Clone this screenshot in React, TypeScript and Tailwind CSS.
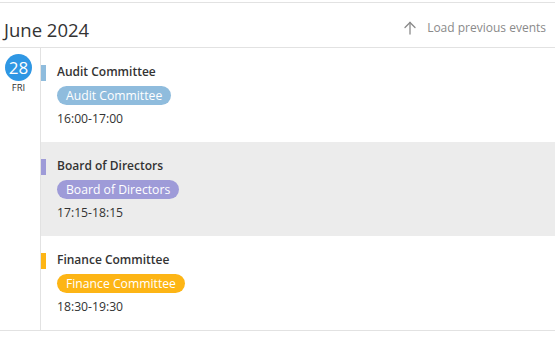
import React from 'react'

type Ev = { title: string; time: string; color: string; bar: string; shaded?: boolean }

const EVENTS: Ev[] = [
  { title: 'Audit Committee', time: '16:00-17:00', color: 'bg-[#8fbcdd]', bar: 'bg-[#8fbcdd]' },
  { title: 'Board of Directors', time: '17:15-18:15', color: 'bg-[#9e9bd8]', bar: 'bg-[#9e9bd8]', shaded: true },
  { title: 'Finance Committee', time: '18:30-19:30', color: 'bg-[#fdb515]', bar: 'bg-[#fdb515]' },
]

function ArrowUp() {
  return (
    <svg width="12" height="14" viewBox="0 0 12 14" fill="none" stroke="#8a8a8a" strokeWidth="1.3" strokeLinecap="round">
      <path d="M6 13V1.5" />
      <path d="M1 6.5L6 1.5L11 6.5" />
    </svg>
  )
}

export default function App() {
  return (
    <div className="w-[555px] h-[348px] bg-white font-['Open_Sans',sans-serif] text-[#333]">
      <div className="h-[2px]" />
      <div className="border-t border-[#e2e2e2] h-[45px] flex items-center justify-between pl-[4px] pr-[9px]">
        <h1 className="text-[18.5px] leading-none text-[#333] pt-[11px]">June 2024</h1>
        <button className="flex items-center gap-[11px] text-[12px] text-[#8a8a8a] pt-[6px]">
          <ArrowUp />
          <span>Load previous events</span>
        </button>
      </div>
      <div className="border-t border-b border-[#e2e2e2] flex">
        <div className="w-[41px] shrink-0 border-r border-[#e2e2e2] flex flex-col items-center pt-[6px]">
          <div className="w-[27px] h-[27px] rounded-full bg-[#2f97e4] text-white text-[17px] leading-none flex items-center justify-center -ml-[3px]">
            28
          </div>
          <div className="text-[9.5px] leading-none mt-[2px] -ml-[3px] text-[#333]">FRI</div>
        </div>
        <div className="flex-1 flex flex-col">
          {EVENTS.map((e) => (
            <div key={e.title} className={`h-[94px] flex ${e.shaded ? 'bg-[#ececec]' : ''}`}>
              <div className={`w-[5px] h-[16px] mt-[17px] shrink-0 ${e.bar}`} />
              <div className="pl-[11px] pt-[15px] flex flex-col items-start">
                <div className="text-[12px] font-semibold leading-[18px] text-[#333]">{e.title}</div>
                <div className={`mt-[5px] h-[19px] rounded-full px-[9px] text-white text-[12.2px] leading-[19px] ${e.color}`}>
                  {e.title}
                </div>
                <div className="mt-[5px] text-[12.2px] leading-[18px] text-[#333]">{e.time}</div>
              </div>
            </div>
          ))}
        </div>
      </div>
    </div>
  )
}
